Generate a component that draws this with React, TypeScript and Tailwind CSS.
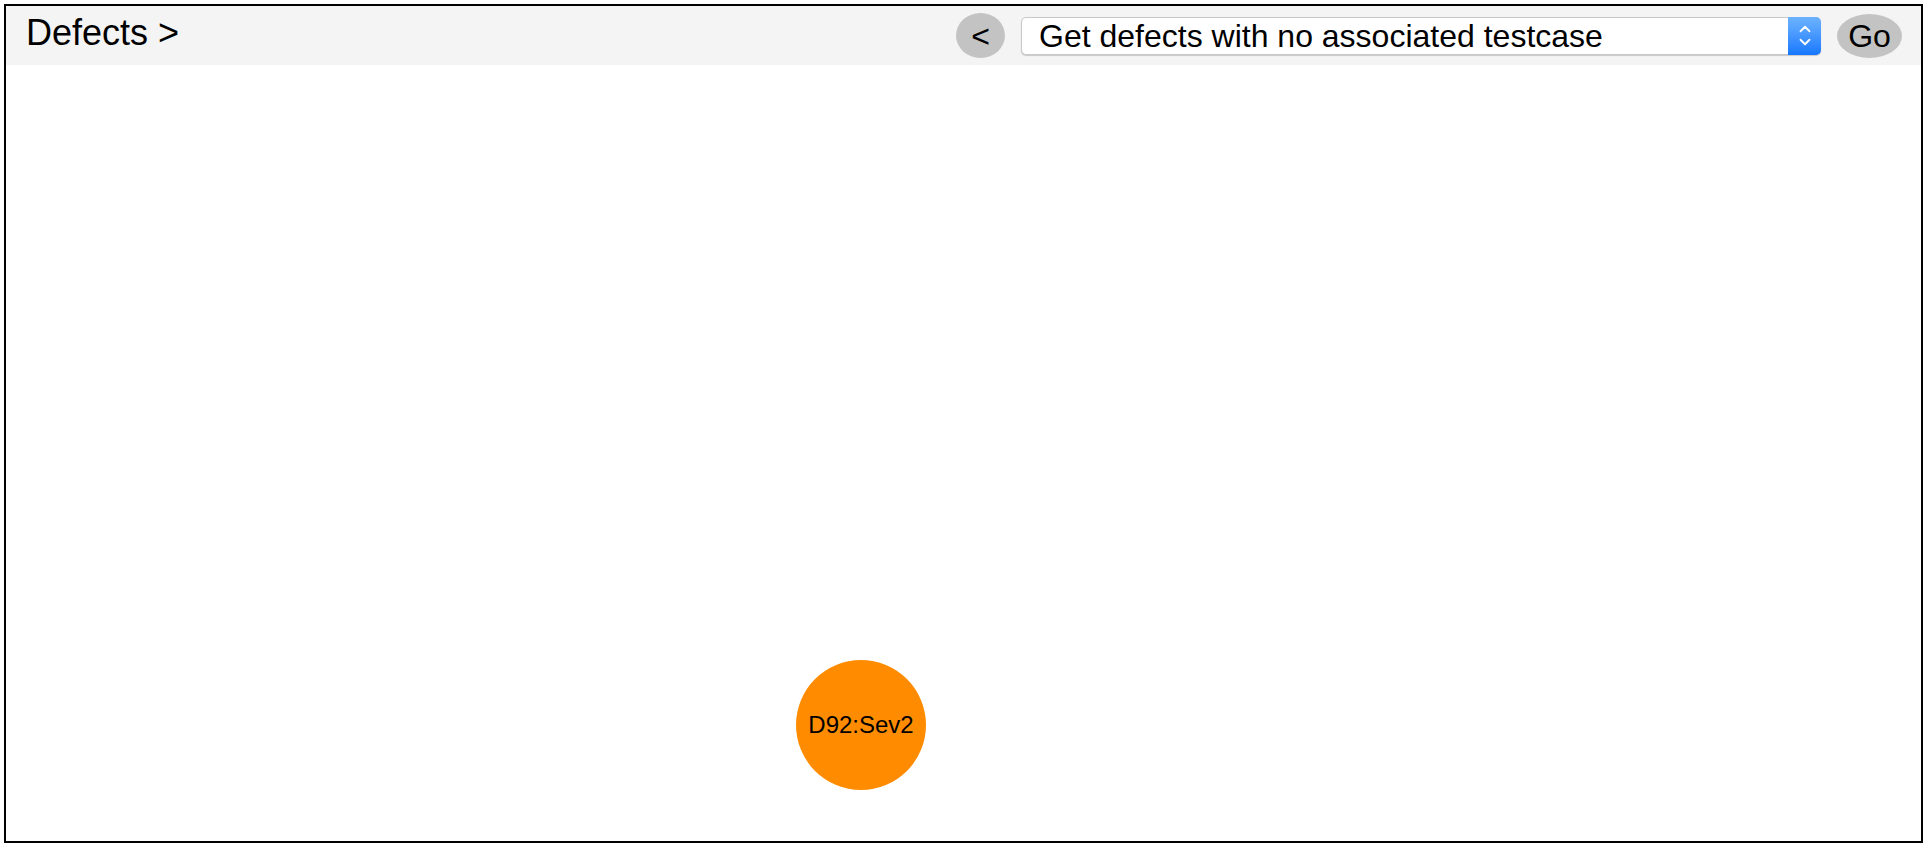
import { ChevronDown, ChevronUp } from "lucide-react";

function QuerySelect() {
  return (
    <div className="relative flex h-[38px] w-[800px] items-center rounded-[5px] border border-[#c8c8c8] bg-white shadow-[0_1px_1px_rgba(0,0,0,0.18)]">
      <span className="pl-[17px] text-[32px] leading-none text-black">
        Get defects with no associated testcase
      </span>
      <div className="absolute right-[-1px] top-[-1px] flex h-[38px] w-[33px] flex-col items-center justify-center rounded-r-[5px] bg-gradient-to-b from-[#6cb2ff] to-[#1478ff]">
        <ChevronUp className="-mb-[5px] h-[18px] w-[18px] text-white" strokeWidth={2.4} />
        <ChevronDown className="h-[18px] w-[18px] text-white" strokeWidth={2.4} />
      </div>
    </div>
  );
}

export default function App() {
  return (
    <div className="h-[848px] w-[1926px] bg-white p-[4px] pr-[3px] pb-[5px]" style={{ fontFamily: '"Liberation Sans", Arial, sans-serif' }}>
      <div className="flex h-full flex-col border-2 border-black">
        <div className="flex h-[59px] shrink-0 items-center bg-[#f4f4f4] pl-[20px] pr-[19px]">
          <h1 className="-mt-[6px] text-[36px] leading-none text-black">Defects &gt;</h1>
          <div className="ml-auto flex items-center gap-4">
            <button className="flex h-[45px] w-[49px] items-center justify-center rounded-[50%] bg-[#c3c3c3] text-[32px] leading-none text-black">
              &lt;
            </button>
            <QuerySelect />
            <button className="flex h-[44px] w-[65px] items-center justify-center rounded-[50%] bg-[#c3c3c3] text-[32px] leading-none text-black">
              Go
            </button>
          </div>
        </div>
        <div className="relative flex-1">
          <div className="absolute left-[790px] top-[595px] flex h-[130px] w-[130px] items-center justify-center rounded-full bg-[#ff8c00]">
            <span className="text-[24px] leading-none text-black">D92:Sev2</span>
          </div>
        </div>
      </div>
    </div>
  );
}
